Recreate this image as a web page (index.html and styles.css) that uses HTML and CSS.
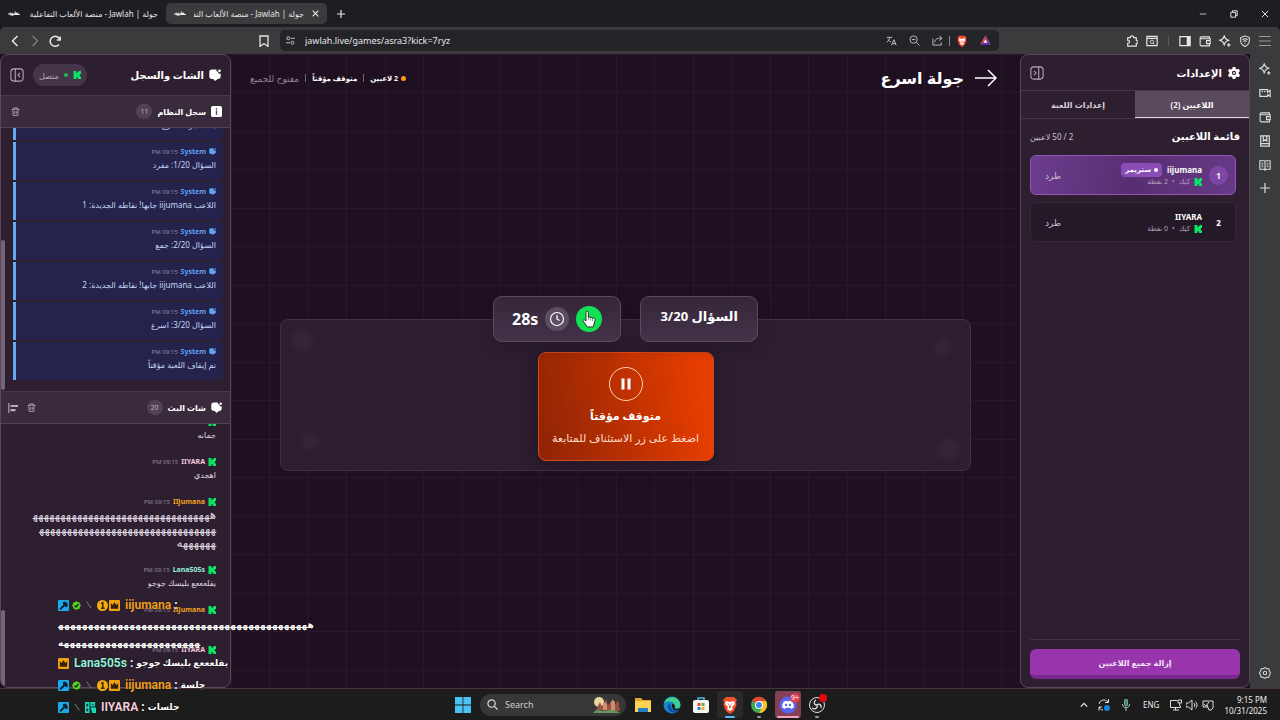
FILE: index.html
```html
<!DOCTYPE html>
<html lang="ar">
<head>
<meta charset="utf-8">
<title>جولة | Jawlah - منصة الألعاب التفاعلية</title>
<link rel="stylesheet" href="styles.css">
</head>
<body>
<svg class="defs" aria-hidden="true">
  <symbol id="kick" viewBox="0 0 16 16"><path fill="#0be567" d="M1 0h6v4h2V2h2V0h5v6h-2v2h-1v1h1v2h2v5h-6v-2H9v-2H7v4H1z"/></symbol>
  <symbol id="bubble" viewBox="0 0 20 20"><path fill="currentColor" d="M5 1h7.500c-.5 2.200.3 3.500 2.500 3.700.2 2.500 1.800 3.500 4.500 3.300V12a4.500 4.500 0 0 1-4 4.500h-1L10 20l-3-3.500H5A4.500 4.500 0 0 1 .5 12V5.500A4.500 4.500 0 0 1 5 1z"/><circle cx="17.500" cy="3" r="2.300" fill="currentColor"/></symbol>
  <symbol id="trash" viewBox="0 0 16 16"><path fill="none" stroke="currentColor" stroke-width="1.500" d="M1 4h14M5 4V1.500h6V4M3 4l1 11h8l1-11M6.500 7v5M9.500 7v5"/></symbol>
  <symbol id="panel" viewBox="0 0 16 16"><rect x="1" y="1" width="14" height="14" rx="3.500" fill="none" stroke="currentColor" stroke-width="1.200"/><path fill="none" stroke="currentColor" stroke-width="1.200" d="M6 1v14M11.500 5.500L9 8l2.500 2.500"/></symbol>
  <symbol id="spark" viewBox="0 0 16 16"><path fill="none" stroke="currentColor" stroke-width="1.500" stroke-linejoin="round" d="M7 .800c.7 4 2.200 5.500 6.500 6.200-4.300.7-5.800 2.200-6.500 6.500C6.300 9.200 4.800 7.700.500 7 4.800 6.300 6.300 4.800 7 .800z"/><path stroke="currentColor" stroke-width="1.500" d="M13 11v4.500M10.800 13.200h4.500"/></symbol>
  <symbol id="wallet" viewBox="0 0 16 16"><path fill="none" stroke="currentColor" stroke-width="1.400" d="M14 5V2.500H3a1.500 1.500 0 0 0-1.500 1.500v9A1.500 1.500 0 0 0 3 14.500h11V12M2 5h13v2.500M10 7.500h5v4h-5z"/></symbol>
  <symbol id="brave" viewBox="0 0 16 18"><path fill="#f1502f" d="M4 1h8l3 3-1 2 .5 3-2.500 6-4 3-4-3-2.500-6L2 6 1 4z"/><path fill="#fff" d="M4 5l4 1 4-1 1 3-3 3 1 2-3 2-3-2 1-2-3-3z"/><path fill="#f1502f" d="M5 7l2 1v1zM11 7L9 8v1zM7.500 9h1l.5 2.500-1 .8-1-.8z"/></symbol>
  <symbol id="jlogo" viewBox="0 0 22 10"><path fill="none" stroke="#eee" stroke-width="2" stroke-linecap="round" d="M1 5h3V3M4 6c2 1 3 0 3-2 2-1 3 1 2 3H7M10 6h3V1M14 6c1-4 5-3 4 0h-4M18 6h3"/></symbol>
  <symbol id="crown" viewBox="0 0 12 12"><rect width="12" height="12" rx="1" fill="#f0a010"/><path fill="#33230a" d="M2 3.500l2 2 2-3 2 3 2-2V9.500H2z"/></symbol>
  <symbol id="hammer" viewBox="0 0 12 12"><rect width="12" height="12" rx="1" fill="#1ba9ea"/><path fill="#10202c" d="M5 2.500L8 1.500 10.500 4v3L9 8 7.500 6.500 3 11 1.500 9.500 6 5z"/></symbol>
  <symbol id="check" viewBox="0 0 12 12"><path fill="#53d820" d="M6 0l1.700 1.500L10 1.700l.5 2.300L12 6l-1.500 2-.5 2.300-2.300.2L6 12l-1.700-1.500-2.300-.2L1.500 8 0 6l1.500-2L2 1.700l2.300-.2z"/><path fill="none" stroke="#122" stroke-width="1.700" d="M3.300 6l2 2 3.500-4"/></symbol>
  <symbol id="blade" viewBox="0 0 12 12"><path stroke="#808080" stroke-width="1.200" d="M3 2l6 8"/></symbol>
  <symbol id="coin" viewBox="0 0 12 12"><circle cx="6" cy="6" r="6" fill="#f5ac0c"/><path fill="none" stroke="#3a2703" stroke-width="1.700" d="M4.300 4L6.300 3v6M4.300 9h4"/></symbol>
</svg>

<header class="tabs" dir="ltr">
  <div class="tab"><svg class="jlogo"><use href="#jlogo"/></svg><span class="tab-title" dir="rtl">جولة | Jawlah - منصة الألعاب التفاعلية</span></div>
  <div class="tab active"><svg class="jlogo"><use href="#jlogo"/></svg><span class="tab-title" dir="rtl">جولة | Jawlah - منصة الألعاب التفا</span><button class="plain" aria-label="Close tab"><svg class="i7" viewBox="0 0 10 10"><path stroke="currentColor" stroke-width="1.700" d="M1 1l8 8M9 1L1 9"/></svg></button></div>
  <button class="plain newtab" aria-label="New tab"><svg class="i8" viewBox="0 0 10 10"><path stroke="currentColor" stroke-width="1.500" d="M5 0v10M0 5h10"/></svg></button>
  <div class="wincontrols">
    <button class="plain" aria-label="Minimize"><svg class="i8" viewBox="0 0 10 10"><path stroke="currentColor" d="M1 5h8"/></svg></button>
    <button class="plain" aria-label="Restore"><svg class="i8" viewBox="0 0 10 10"><path fill="none" stroke="currentColor" stroke-width="1.200" d="M1 3h6v6H1zM3 3V1h6v6H7"/></svg></button>
    <button class="plain" aria-label="Close"><svg class="i8" viewBox="0 0 10 10"><path stroke="currentColor" stroke-width="1.200" d="M1 1l8 8M9 1L1 9"/></svg></button>
  </div>
</header>

<nav class="toolbar" dir="ltr">
  <div class="navbtns">
    <button class="plain" aria-label="Back"><svg class="i12" viewBox="0 0 12 12"><path fill="none" stroke="currentColor" stroke-width="1.500" d="M8.500 1l-5 5 5 5"/></svg></button>
    <button class="plain dim" aria-label="Forward"><svg class="i12" viewBox="0 0 12 12"><path fill="none" stroke="currentColor" stroke-width="1.300" d="M3.500 1l5 5-5 5"/></svg></button>
    <button class="plain" aria-label="Reload"><svg class="i12" viewBox="0 0 12 12"><path fill="none" stroke="currentColor" stroke-width="1.500" d="M11 5A5 5 0 1 0 10 9.500M11.200 1.500V5H7.800"/></svg></button>
  </div>
  <button class="plain" aria-label="Bookmark"><svg class="i12" viewBox="0 0 12 12"><path fill="none" stroke="currentColor" stroke-width="1.300" d="M2 1h8v10.500L6 8.500l-4 3z"/></svg></button>
  <div class="urlbar">
    <svg class="i9" viewBox="0 0 12 12"><path fill="none" stroke="currentColor" stroke-width="1.300" d="M6.500 3H12M0 9h5"/><circle cx="3" cy="3" r="2" fill="none" stroke="currentColor" stroke-width="1.300"/><circle cx="8.500" cy="9" r="2" fill="none" stroke="currentColor" stroke-width="1.300"/></svg>
    <input class="url" aria-label="Address" value="jawlah.live/games/asra3?kick=7ryz">
    <button class="plain" aria-label="Translate"><svg class="i11" viewBox="0 0 14 12"><path fill="none" stroke="currentColor" stroke-width="1.200" d="M1 2h7M4.500 2c0 3-1.500 5-3.500 6M2.500 5c1 1.500 2 2 3.500 2.500M7 12l3-7 3 7M8 10h4"/></svg></button>
    <button class="plain" aria-label="Zoom out"><svg class="i11" viewBox="0 0 12 12"><circle cx="5" cy="5" r="4" fill="none" stroke="currentColor"/><path stroke="currentColor" d="M3 5h4M8 8l3.500 3.500"/></svg></button>
    <button class="plain" aria-label="Share"><svg class="i11" viewBox="0 0 12 12"><path fill="none" stroke="currentColor" d="M1 4v7h9V8M3 8c0-3 2-4.500 7-4.500M8 1l3 2.500L8 6"/></svg></button>
    <span class="sep"></span>
    <button class="plain" aria-label="Shields"><svg class="i12" viewBox="0 0 16 18"><use href="#brave"/></svg></button>
    <button class="plain" aria-label="Rewards"><svg class="i11" viewBox="0 0 12 12"><path fill="#e8483b" d="M6 0L0 11l6-4z"/><path fill="#8c3fae" d="M6 0l6 11-6-4z"/><path fill="#5136a8" d="M0 11h12L6 7z"/><path fill="#fff" d="M6 5l2 3.500H4z"/></svg></button>
  </div>
  <div class="exts">
    <button class="plain" aria-label="Extensions"><svg class="i12" viewBox="0 0 14 14"><path fill="none" stroke="currentColor" stroke-width="1.400" stroke-linejoin="round" d="M2 3h3a2 2 0 1 1 4 0h3v3.500a1.700 1.700 0 1 1 0 3.300V13H2V9.500a1.700 1.700 0 1 0 0-3.300z"/></svg></button>
    <button class="plain" aria-label="Search tabs"><svg class="i12" viewBox="0 0 14 14"><path fill="none" stroke="currentColor" stroke-width="1.400" d="M1 1.500h12v11H1zM1 4h12"/><circle cx="7" cy="8" r="2" fill="none" stroke="currentColor"/><path stroke="currentColor" d="M8.500 9.500l1.500 1.500"/></svg></button>
    <span class="sep wide"></span>
    <button class="plain" aria-label="Sidebar"><svg class="i12" viewBox="0 0 14 14"><path fill="none" stroke="currentColor" stroke-width="1.400" d="M1 2h12v10.500H1z"/><path fill="currentColor" d="M9 2h4v10H9z"/></svg></button>
    <button class="plain" aria-label="Wallet"><svg class="i12"><use href="#wallet"/></svg></button>
    <button class="plain" aria-label="Leo AI"><svg class="i12"><use href="#spark"/></svg></button>
    <button class="plain" aria-label="VPN"><svg class="i12" viewBox="0 0 14 14"><path fill="none" stroke="currentColor" stroke-width="1.200" d="M7 1l5 2v4c0 3-2 5-5 6.500C4 12 2 10 2 7V3zM4 5.500c2-1.500 4-1.500 6 0M5 7.500c1.500-1 2.500-1 4 0M6.500 9.500h1"/></svg></button>
    <button class="plain dimmer" aria-label="Menu"><svg class="i12" viewBox="0 0 12 12"><path stroke="currentColor" stroke-width="1.200" d="M0 1.500h12M0 6h12M0 10.500h12"/></svg></button>
  </div>
</nav>

<div class="browser">
<main class="app" dir="rtl">
  <aside class="panel settings">
    <div class="settings-head">
      <h2><svg class="i12" viewBox="0 0 14 14"><path fill="currentColor" fill-rule="evenodd" d="M5.500 0h3l.5 2 1.500.8 2-.7L14 4.700l-1.500 1.500v1.600L14 9.300l-1.500 2.600-2-.7L9 12l-.5 2h-3L5 12l-1.500-.8-2 .7L0 9.300l1.500-1.500V6.200L0 4.700l1.500-2.600 2 .7L5 2zM7 4.500a2.500 2.500 0 1 0 0 5 2.500 2.500 0 0 0 0-5z"/><circle cx="7" cy="7" r="1.200" fill="currentColor"/></svg>الإعدادات</h2>
      <button class="plain muted flip" aria-label="طي الإعدادات"><svg class="i14"><use href="#panel"/></svg></button>
    </div>
    <div class="settings-tabs">
      <button class="stab on">اللاعبين (2)</button>
      <button class="stab">إعدادات اللعبة</button>
    </div>
    <section class="players">
      <div class="players-title"><h3>قائمة اللاعبين</h3><span>2 / 50 لاعبين</span></div>
      <div class="players-list">
        <article class="player top">
          <span class="rank">1</span>
          <div class="pinfo">
            <div class="pname"><b>iijumana</b><span class="badge"><i></i>ستريمر</span></div>
            <div class="pmeta"><svg class="i8"><use href="#kick"/></svg><span>كيك</span><span>•</span><span>2 نقطة</span></div>
          </div>
          <button class="kickbtn">طرد</button>
        </article>
        <article class="player">
          <span class="rank">2</span>
          <div class="pinfo">
            <div class="pname"><b>IIYARA</b></div>
            <div class="pmeta"><svg class="i8"><use href="#kick"/></svg><span>كيك</span><span>•</span><span>0 نقطة</span></div>
          </div>
          <button class="kickbtn">طرد</button>
        </article>
      </div>
    </section>
    <footer class="settings-foot"><button class="remove">إزالة جميع اللاعبين</button></footer>
  </aside>

  <section class="stage">
    <header class="stage-head">
      <button class="plain" aria-label="رجوع"><svg class="arrow" viewBox="0 0 22 18"><path fill="none" stroke="currentColor" stroke-width="1.500" d="M0 9h21M13 1l8 8-8 8"/></svg></button>
      <h1>جولة اسرع</h1>
      <div class="status"><i class="odot"></i><span>2 لاعبين</span><em></em><span>متوقف مؤقتاً</span><em></em><span class="open">مفتوح للجميع</span></div>
    </header>
    <div class="board-wrap">
      <div class="board">
        <div class="pills">
          <div class="pill"><span class="question">السؤال 3/20</span></div>
          <div class="pill timer">
            <button class="resume" aria-label="استئناف"><svg class="hand" viewBox="0 0 14 18"><path fill="#fff" stroke="#333" stroke-width="1" d="M4 11V2.500a1.200 1.200 0 0 1 2.400 0V7l1.800.2 2 .5 2 .6c.8.3 1 .8.800 2L12 14l-1 3H5.500L1 11c-.4-1 1-1.600 1.700-.9z"/><path stroke="#666" stroke-width=".7" d="M6.400 7v3M8.400 7.500v3M10.500 8v3"/></svg></button>
            <span class="clock"><svg class="i16" viewBox="0 0 16 16"><circle cx="8" cy="8" r="6.500" fill="none" stroke="currentColor" stroke-width="1.200"/><path fill="none" stroke="currentColor" stroke-width="1.200" d="M8 4v4l2.500 1.500"/></svg></span>
            <strong dir="ltr">28s</strong>
          </div>
        </div>
        <i class="blob b1"></i><i class="blob b2"></i><i class="blob b3"></i><i class="blob b4"></i>
        <div class="paused">
          <span class="pauseicon"><svg class="i14" viewBox="0 0 14 14"><path fill="currentColor" d="M2.500 1.500h3v11h-3zM8.500 1.500h3v11h-3z"/></svg></span>
          <h2>متوقف مؤقتاً</h2>
          <p>اضغط على زر الاستئناف للمتابعة</p>
        </div>
      </div>
    </div>
  </section>

  <aside class="panel chat">
    <div class="chat-head">
      <h2><svg class="i12"><use href="#bubble"/></svg>الشات والسجل</h2>
      <span class="online"><svg class="i8"><use href="#kick"/></svg><i></i>متصل</span>
      <button class="plain muted" aria-label="طي الشات"><svg class="i14"><use href="#panel"/></svg></button>
    </div>
    <div class="sub-head">
      <h3><svg class="i11" viewBox="0 0 12 12"><rect width="12" height="12" rx="2" fill="currentColor"/><path stroke="#56465a" stroke-width="1.500" d="M6 5v4.500M6 2.500V4"/></svg>سجل النظام</h3><span class="count">11</span>
      <span class="acts"><button class="plain" aria-label="مسح السجل"><svg class="i9"><use href="#trash"/></svg></button></span>
    </div>
    <div class="log">
      <span class="thumb t1"></span>
      <article class="sys"><div class="meta"><svg class="i7"><use href="#bubble"/></svg><b>System</b><time>09:15 PM</time></div><p>بدأت جولة اسرع</p></article>
      <article class="sys"><div class="meta"><svg class="i7"><use href="#bubble"/></svg><b>System</b><time>09:15 PM</time></div><p>السؤال 1/20: مفرد</p></article>
      <article class="sys"><div class="meta"><svg class="i7"><use href="#bubble"/></svg><b>System</b><time>09:15 PM</time></div><p>اللاعب iijumana جابها! نقاطه الجديدة: 1</p></article>
      <article class="sys"><div class="meta"><svg class="i7"><use href="#bubble"/></svg><b>System</b><time>09:15 PM</time></div><p>السؤال 2/20: جمع</p></article>
      <article class="sys"><div class="meta"><svg class="i7"><use href="#bubble"/></svg><b>System</b><time>09:15 PM</time></div><p>اللاعب iijumana جابها! نقاطه الجديدة: 2</p></article>
      <article class="sys"><div class="meta"><svg class="i7"><use href="#bubble"/></svg><b>System</b><time>09:15 PM</time></div><p>السؤال 3/20: اسرع</p></article>
      <article class="sys"><div class="meta"><svg class="i7"><use href="#bubble"/></svg><b>System</b><time>09:15 PM</time></div><p>تم إيقاف اللعبة مؤقتاً</p></article>
    </div>
    <div class="sub-head second">
      <h3><svg class="i11"><use href="#bubble"/></svg>شات البث</h3><span class="count">20</span>
      <span class="acts"><button class="plain" aria-label="مسح الشات"><svg class="i9"><use href="#trash"/></svg></button><button class="plain" aria-label="محاذاة"><svg class="i10" viewBox="0 0 12 12"><path stroke="currentColor" stroke-width="1.300" d="M1 0v12"/><path stroke="currentColor" stroke-width="2.500" d="M3 3.500h9M3 8.500h6"/></svg></button></span>
    </div>
    <div class="messages">
      <span class="thumb t2"></span>
      <article class="msg"><div class="meta"><svg class="i8"><use href="#kick"/></svg><b class="pink">IIYARA</b><time>09:15 PM</time></div><p>جمانه</p></article>
      <article class="msg"><div class="meta"><svg class="i8"><use href="#kick"/></svg><b class="pink">IIYARA</b><time>09:15 PM</time></div><p>اهجدي</p></article>
      <article class="msg"><div class="meta"><svg class="i8"><use href="#kick"/></svg><b class="orange">IIJumana</b><time>09:15 PM</time></div><p class="laugh">ههههههههههههههههههههههههههههههههه&zwj;<br>&zwj;هههههههههههههههههههههههههههههههه&zwj;<br>&zwj;ههههههه</p></article>
      <article class="msg"><div class="meta"><svg class="i8"><use href="#kick"/></svg><b class="mint">Lana505s</b><time>09:15 PM</time></div><p>يقلعععع بليسك جوجو</p></article>
      <article class="msg"><div class="meta"><svg class="i8"><use href="#kick"/></svg><b class="orange">IIJumana</b><time>09:15 PM</time></div><p>&nbsp;</p></article>
      <article class="msg"><div class="meta"><svg class="i8"><use href="#kick"/></svg><b class="pink">IIYARA</b><time>09:15 PM</time></div><p>&nbsp;</p></article>
    </div>
  </aside>
</main>
<nav class="sidebar" dir="ltr">
  <button class="plain" aria-label="Leo AI"><svg class="i12"><use href="#spark"/></svg></button>
  <button class="plain" aria-label="Talk"><svg class="i12" viewBox="0 0 14 14"><path fill="none" stroke="currentColor" stroke-width="1.400" d="M1 3h9v3l3-2v7l-3-2v2H1zM3 5.500h1.500M6 5.500h1.500"/></svg></button>
  <button class="plain" aria-label="Wallet"><svg class="i12"><use href="#wallet"/></svg></button>
  <button class="plain" aria-label="Bookmarks"><svg class="i12" viewBox="0 0 14 14"><path fill="none" stroke="currentColor" stroke-width="1.400" d="M2 1h10v12H2zM2 10h10M5 1v6l2-1.500L9 7V1"/></svg></button>
  <button class="plain" aria-label="Reading list"><svg class="i12" viewBox="0 0 14 14"><path fill="none" stroke="currentColor" stroke-width="1.300" d="M1 2h5l1 1 1-1h5v10H8l-1 1-1-1H1zM7 3v9M3 5h2M3 7h2M3 9h2M9 5h2M9 7h2M9 9h2"/></svg></button>
  <button class="plain" aria-label="Add"><svg class="i10" viewBox="0 0 10 10"><path stroke="currentColor" stroke-width="1.200" d="M5 0v10M0 5h10"/></svg></button>
  <button class="plain gear" aria-label="Settings"><svg class="i12" viewBox="0 0 14 14"><path fill="none" stroke="currentColor" stroke-width="1.200" stroke-linejoin="round" d="M5 2l2-1.300L9 2h2.500l.5 2.500L13.500 7 12 9.500 11.500 12H9l-2 1.300L5 12H2.500L2 9.500.5 7 2 4.500 2.500 2z"/><circle cx="7" cy="7" r="2" fill="none" stroke="currentColor" stroke-width="1.200"/></svg></button>
</nav>
</div>

<footer class="taskbar" dir="ltr">
  <div class="apps">
    <button class="app-ic" aria-label="Start"><svg class="i16" viewBox="0 0 16 16"><path fill="#4cc2f4" d="M0 0h7.600v7.600H0zM8.400 0H16v7.600H8.400zM0 8.400h7.600V16H0zM8.400 8.400H16V16H8.400z"/></svg></button>
    <label class="search"><svg class="i11" viewBox="0 0 12 12"><circle cx="5" cy="5" r="4" fill="none" stroke="currentColor" stroke-width="1.300"/><path stroke="currentColor" stroke-width="1.300" d="M8 8l3.500 3.500"/></svg><input aria-label="Search" placeholder="Search"><svg class="scene" viewBox="0 0 28 18"><circle cx="6" cy="6" r="5" fill="#ead79c"/><path fill="#99523f" d="M3 14l4-8 2 5 4-8 2 6 5-6 2 6 3-5 2 11z"/><path fill="#cf9070" d="M10 14V8l2-2 2 2v6zM18 14V6l2-2 2 2v8z"/><path fill="#6c9262" d="M0 17c4-5 8-2 11-2s8-4 16 2z"/></svg></label>
    <button class="app-ic" aria-label="File Explorer"><svg class="i18" viewBox="0 0 18 18"><path fill="#e2a52c" d="M1 2h6l2 2h8v12H1z"/><path fill="#fbd251" d="M1 5h16v11H1z"/><path fill="#2280c5" d="M4 12h10v4H4z"/></svg></button>
    <button class="app-ic" aria-label="Edge"><svg class="i18" viewBox="0 0 18 18"><circle cx="9" cy="9" r="8.500" fill="#1686cf"/><path fill="#42cf87" d="M1 7A8.500 8.500 0 0 1 17.500 9c0 3-3 4-6 3 2-4-2-7-5-6.500C4 5.500 2 6 1 7z"/><path fill="#124c9c" d="M6 7c-3 4 0 10 6 9.800 2-.3 3.500-1.500 4-2.600-4 1.800-8-.5-8-3.700z"/><path fill="#1c1c1c" d="M9 8c2-.5 4 2 2.500 4 2 1.300 4 1 5.500 0l-1 2c-4 1.500-8-1-7-6z"/></svg></button>
    <button class="app-ic" aria-label="Store"><svg class="i18" viewBox="0 0 18 18"><path fill="none" stroke="#48b8ef" stroke-width="1.500" d="M6 5V2h6v3"/><rect x="1" y="4" width="16" height="13" rx="2" fill="#f4f4f4"/><path fill="#e84b32" d="M5.500 7h3v3h-3z"/><path fill="#6cb33e" d="M9.500 7h3v3h-3z"/><path fill="#2585dc" d="M5.500 11h3v3h-3z"/><path fill="#f2b51d" d="M9.500 11h3v3h-3z"/></svg></button>
    <button class="app-ic lit" aria-label="Brave"><svg class="i18" viewBox="0 0 16 18"><use href="#brave"/></svg></button>
    <button class="app-ic run" aria-label="Chrome"><svg class="i18" viewBox="0 0 18 18"><circle cx="9" cy="9" r="8" fill="#3bab55"/><path fill="#e44336" d="M9 9L2 5a8 8 0 0 1 14 0z"/><path fill="#f9c421" d="M9 5h7a8 8 0 0 1-7 12l4-7z"/><circle cx="9" cy="9" r="4" fill="#fff"/><circle cx="9" cy="9" r="3" fill="#4286ee"/></svg></button>
    <button class="app-ic discord" aria-label="Discord"><svg class="i18" viewBox="0 0 18 18"><circle cx="9" cy="9" r="8.500" fill="#5865f2"/><path fill="#fff" d="M5 5.500l3-.7.5.7h1l.5-.7 3 .7c1.500 2 2 4 1.800 6L12 13l-.8-1.300H6.800L6 13l-2.800-1.500C3 9.500 3.500 7.500 5 5.500z"/><circle cx="7" cy="9" r="1.200" fill="#5865f2"/><circle cx="11" cy="9" r="1.200" fill="#5865f2"/></svg><span class="nine">9+</span></button>
    <button class="app-ic run" aria-label="OBS"><svg class="i18" viewBox="0 0 18 18"><circle cx="9" cy="9" r="7.500" fill="#222" stroke="#ddd"/><path fill="none" stroke="#ddd" stroke-width="1.300" d="M9 9c-3 0-4-3-1-5M9 9c2-2 5 0 4 3M9 9c1 3-2 5-5 3"/></svg><span class="rec"></span></button>
  </div>
  <div class="tray">
    <button class="plain" aria-label="Hidden icons"><svg class="i8" viewBox="0 0 10 10"><path fill="none" stroke="currentColor" stroke-width="1.500" d="M1 7l4-4 4 4"/></svg></button>
    <svg class="i12" viewBox="0 0 12 12"><path fill="none" stroke="#ddd" d="M1 5a5 5 0 0 1 9-2M10.500 0v3.500H7M1 11.500V8h3M1 8c1 2 2 3 4 3"/><circle cx="9" cy="9" r="3" fill="#1684df"/></svg>
    <svg class="i12" viewBox="0 0 12 12"><rect x="4.500" y="0" width="3" height="7" rx="1.500" fill="#3a8378" stroke="#a8ccc6" stroke-width=".7"/><path fill="none" stroke="#a8ccc6" d="M2.500 5c0 5 7 5 7 0M6 9v3"/></svg>
    <span class="lang">ENG</span>
    <span class="group"><svg class="i12" viewBox="0 0 12 12"><path fill="none" stroke="#ddd" d="M7 1.500H.5v7h10V7M3 11h6M5.500 8.500V11M8 1h3.500v3H8zM9.700 4v3"/></svg>
    <svg class="i12" viewBox="0 0 12 12"><path fill="none" stroke="#ddd" d="M0 4h2.500L6 1v10L2.500 8H0zM8 4c1 1 1 3 0 4M9.500 2.500c2 2 2 5 0 7"/></svg>
    <svg class="i12" viewBox="0 0 12 12"><path fill="none" stroke="#ddd" d="M6 8H1V2h10v3M2 5l2 2 3-4M5 6l2 5h2l2-2V5"/></svg></span>
    <time class="clocktext">9:15 PM<br>10/31/2025</time>
  </div>
</footer>

<div class="overlay" dir="ltr">
  <div class="orow"><svg class="i11"><use href="#hammer"/></svg><svg class="i9"><use href="#check"/></svg><svg class="i10"><use href="#blade"/></svg><svg class="i11 coin"><use href="#coin"/></svg><svg class="i11"><use href="#crown"/></svg><b class="orange">iijumana</b><b>:</b></div>
  <p class="owrap">ههههههههههههههههههههههههههههههههههههههههههه&zwj;<br>&zwj;هههههههههههههههههههههههه</p>
  <div class="orow"><svg class="i11"><use href="#crown"/></svg><b class="mint">Lana505s</b><b>:</b><b class="said">يقلعععع بليسك جوجو</b></div>
  <div class="orow"><svg class="i11"><use href="#hammer"/></svg><svg class="i9"><use href="#check"/></svg><svg class="i10"><use href="#blade"/></svg><svg class="i11 coin"><use href="#coin"/></svg><svg class="i11"><use href="#crown"/></svg><b class="orange">iijumana</b><b>:</b><b class="said">جلسة</b></div>
  <div class="orow"><svg class="i11"><use href="#hammer"/></svg><svg class="i10"><use href="#blade"/></svg><svg class="i11" viewBox="0 0 12 12"><path fill="#18d9b8" d="M0 0h5v12H0zM6 0h5v5H6zM6 6h6v6H8z"/><path fill="#18323a" d="M1.500 2h2v3h-2zM1.500 7h2v3h-2zM8 2h1.500v1.500H8z"/></svg><b class="pink">IIYARA</b><b>:</b><b class="said">جلسات</b></div>
</div>
</body>
</html>
```
FILE: styles.css
```css
* { box-sizing: border-box; }
body { margin: 0; height: 100vh; display: flex; flex-direction: column; position: relative; overflow: hidden; background: #1f1021; color: #fff; font-family: "Noto Sans", "DejaVu Sans", sans-serif; font-size: 9px; }
h1, h2, h3, p { margin: 0; }
button, input { font: inherit; color: inherit; }
.defs { position: absolute; width: 0; height: 0; }
svg { flex: none; display: block; }
.plain { background: none; border: 0; padding: 0; display: flex; align-items: center; justify-content: center; }
.i7 { width: 7px; height: 7px; } .i8 { width: 8px; height: 8px; } .i9 { width: 9px; height: 9px; }
.i10 { width: 10px; height: 10px; } .i11 { width: 11px; height: 11px; } .i12 { width: 12px; height: 12px; }
.i14 { width: 14px; height: 14px; } .i16 { width: 16px; height: 16px; } .i18 { width: 18px; height: 18px; }

.tabs { flex: none; height: 27px; background: #1e1e22; display: flex; align-items: center; color: #e6e6e8; }
.tab { width: 166px; height: 21px; padding: 0 8px; display: flex; align-items: center; gap: 8px; border-radius: 5px; }
.tab.active { width: 161px; background: #3b3b3e; }
.jlogo { width: 12px; height: 8px; }
.tab-title { flex: 1; white-space: nowrap; overflow: hidden; font-size: 8px; line-height: 16px; }
.newtab { margin-left: 10px; }
.wincontrols { margin-left: auto; display: flex; gap: 23px; padding-right: 11px; }

.toolbar { flex: none; height: 27px; background: #3b3b3e; display: flex; align-items: center; gap: 10px; padding: 0 9px; color: #e6e6e8; border-radius: 5px 5px 0 0; }
.navbtns { display: flex; gap: 8px; flex: 0 0 239px; }
.dim { color: #818184; } .dimmer { color: #9b9b9e; }
.urlbar { flex: 1; height: 21px; border-radius: 5px; background: #242428; display: flex; align-items: center; gap: 12px; padding: 0 8px 0 6px; color: #c4c4c8; }
.url { flex: 1; min-width: 0; margin-left: -2px; padding: 0; border: 0; background: none; font-size: 9px; color: #e6e6e8; }
.sep { width: 1px; height: 10px; background: #88888b; margin: 0 -6px; } .sep.wide { margin: 0 2px; background: #58585b; }
.exts { display: flex; align-items: center; gap: 8px; padding-left: 117px; }

.browser { flex: 1; min-height: 0; display: flex; }
.app { flex: 1; min-width: 0; display: flex; }
.sidebar { flex: 0 0 30px; background: #3b3b3e; color: #dcdcde; display: flex; flex-direction: column; align-items: center; gap: 12px; padding: 9px 0; }
.gear { margin-top: auto; }
.panel { flex: 0 0 230px; min-height: 0; display: flex; flex-direction: column; background: #2e1f30; border: 1px solid #59465c; border-radius: 8px; overflow: hidden; }
.panel.chat { flex-basis: 231px; }
.muted { color: #b5a9b8; }
.flip { transform: scaleX(-1); }

.settings-head { flex: none; height: 35px; display: flex; align-items: center; justify-content: space-between; padding: 0 9px; }
.settings-head h2 { display: flex; align-items: center; gap: 6px; font-size: 10px; }
.settings-tabs { flex: none; height: 29px; display: flex; border-top: 1px solid #463449; border-bottom: 1px solid #463449; }
.stab { flex: 1; background: none; border: 0; padding: 0; font-size: 8px; color: #d8cfda; font-weight: 600; }
.stab.on { background: #5a4a5e; color: #fff; border-bottom: 1px solid #e0d6e2; }
.players { flex: 1; min-height: 0; padding: 8px 9px; }
.players-title { display: flex; justify-content: space-between; align-items: center; height: 18px; color: #cfc4d2; font-size: 8px; }
.players-title h3 { font-size: 10px; color: #fff; }
.players-list { display: flex; flex-direction: column; gap: 7px; padding: 10px 4px 0 0; }
.player { height: 40px; display: flex; align-items: center; gap: 7px; padding: 0 7px; border: 1px solid #342738; border-radius: 6px; background: #241a27; }
.player.top { background: linear-gradient(100deg, #6c3d8e, #582e72 50%, #663a86); border-color: #9256b4; }
.rank { width: 19px; height: 19px; border-radius: 50%; display: flex; align-items: center; justify-content: center; font-size: 8px; font-weight: 700; }
.top .rank { background: #7d47a5; }
.pinfo { flex: 1; }
.pname { display: flex; align-items: center; gap: 5px; height: 14px; font-size: 8px; line-height: 14px; }
.badge { height: 14px; display: flex; align-items: center; gap: 3px; padding: 0 4px; background: #8b4db5; border-radius: 4px; font-size: 7px; font-weight: 700; }
.badge i { width: 4px; height: 4px; border-radius: 50%; background: #fff; }
.pmeta { display: flex; align-items: center; gap: 4px; font-size: 7px; line-height: 10px; color: #b4a2bd; }
.kickbtn { background: none; border: 0; padding: 0 7px; font-size: 9px; color: #cbbdd0; }
.settings-foot { flex: none; margin: 0 9px; padding: 9px 0 8px; border-top: 1px solid #443247; }
.remove { width: 100%; height: 30px; padding: 0; border: 0; border-bottom: 4px solid #78278c; border-radius: 6px; background: #9834ac; font-size: 8px; font-weight: 600; color: #f6e4fa; }

.stage { flex: 1; min-width: 0; display: flex; flex-direction: column; background-color: #1f1021; background-image: linear-gradient(90deg, #29162b 1px, transparent 1px, transparent 38px, #29162b 38px, #29162b 39px, transparent 39px), linear-gradient(#29162b 1px, transparent 1px, transparent 38px, #29162b 38px, #29162b 39px, transparent 39px); background-size: 77px 77px; }
.stage-head { flex: none; height: 48px; display: flex; align-items: center; gap: 11px; padding: 0 23px 0 19px; }
.arrow { width: 22px; height: 18px; }
.stage-head h1 { font-size: 16px; line-height: 24px; }
.status { margin-right: auto; display: flex; align-items: center; gap: 6px; font-size: 7px; font-weight: 700; }
.status em { width: 1px; height: 8px; background: #75647a; }
.odot { width: 5px; height: 5px; border-radius: 50%; background: #ff981f; margin-left: -3px; }
.open { color: #8f8292; font-weight: 400; font-size: 9px; }
.board-wrap { flex: 1; display: flex; flex-direction: column; justify-content: center; padding: 0 49px; }
.board { position: relative; display: flex; justify-content: center; padding: 32px 0 9px; border: 1px solid #3f3042; border-radius: 8px; background: #2c1e2f; }
.pills { position: absolute; left: 0; right: 0; top: -24px; display: flex; justify-content: center; gap: 19px; z-index: 1; }
.pill { height: 46px; display: flex; align-items: center; gap: 7px; padding: 0 19px; border: 1px solid #594a5d; border-radius: 9px; background: linear-gradient(#352639, #42334a); box-shadow: 0 6px 14px #1f122255; }
.timer { padding: 0 18px; }
.question { font-size: 13px; font-weight: 700; padding-bottom: 6px; }
.timer strong { font-size: 16px; }
.resume { width: 26px; height: 26px; padding: 0; border: 0; border-radius: 50%; background: #10e252; display: flex; align-items: center; justify-content: center; }
.hand { width: 14px; height: 18px; }
.clock { width: 24px; height: 24px; border-radius: 50%; background: #5c4e60; display: flex; align-items: center; justify-content: center; }
.paused { width: 176px; display: flex; flex-direction: column; align-items: center; padding: 14px 10px 14px; border: 1px solid #d34a1b; border-radius: 8px; background: linear-gradient(80deg, #8f2404, #bd3102 50%, #e63d00 90%); box-shadow: 0 3px 16px #1c0e2088; white-space: nowrap; }
.pauseicon { width: 34px; height: 34px; border: 1px solid #ffd2ad; border-radius: 50%; display: flex; align-items: center; justify-content: center; }
.paused h2 { font-size: 11px; line-height: 18px; margin-top: 6px; }
.paused p { font-size: 11px; line-height: 16px; margin-top: 5px; color: #ffdcc8; }
.blob { position: absolute; width: 22px; height: 22px; border-radius: 50%; background: #332536; filter: blur(2px); }
.b1 { left: 10px; top: 10px; } .b2 { right: 18px; top: 18px; width: 18px; height: 18px; } .b3 { left: 20px; bottom: 20px; width: 18px; height: 18px; } .b4 { right: 10px; bottom: 10px; }

.chat-head { flex: none; height: 40px; display: flex; align-items: center; padding: 0 9px; }
.chat-head h2 { display: flex; align-items: center; gap: 5px; font-size: 10px; margin-left: auto; }
.online { height: 22px; display: flex; align-items: center; gap: 5px; padding: 0 6px; border-radius: 11px; background: #453548; color: #b5a9b8; font-size: 8px; margin-left: 9px; }
.online i { width: 4px; height: 4px; border-radius: 50%; background: #20b35a; }
.sub-head { flex: none; height: 33px; display: flex; align-items: center; gap: 5px; padding: 0 8px 0 10px; background: #392a3c; border-top: 1px solid #48384b; border-bottom: 1px solid #534256; }
.second { padding-left: 7px; }
.sub-head h3 { display: flex; align-items: center; gap: 5px; font-size: 8px; }
.count { min-width: 15px; height: 15px; padding: 0 4px; border-radius: 8px; background: #514155; color: #b9adbc; font-size: 7px; line-height: 15px; text-align: center; }
.acts { margin-right: auto; display: flex; gap: 9px; color: #b9adbc; }
.log, .messages { position: relative; flex: 1 1 17px; min-height: 0; overflow: hidden; display: flex; flex-direction: column; justify-content: flex-end; }
.log { gap: 2px; padding: 0 7px 11px 12px; }
.messages { gap: 13px; padding: 0 14px 17px; }
.sys { flex: none; height: 38px; padding: 3px 7px; border-left: 3px solid #65a9f4; border-radius: 0 5px 5px 0; background: #25234b; color: #c4d6f8; }
.sys p, .msg p { font-size: 8px; line-height: 14px; white-space: nowrap; }
.msg .laugh { font-size: 12px; }
.meta { display: flex; align-items: center; gap: 3px; height: 13px; font-size: 7px; }
.sys .meta { color: #5ea4f2; }
.meta time { color: #94899e; font-size: 6px; }
.msg { flex: none; color: #ded5e0; }
.thumb { position: absolute; left: 0; bottom: 1px; width: 4px; border-radius: 2px; background: #756579; }
.t1 { height: 150px; } .t2 { height: 76px; }
.pink { color: #f3c9dc; } .orange { color: #f0a020; } .mint { color: #92efd9; }

.taskbar { flex: none; height: 32px; display: grid; grid-template-columns: 1fr auto 1fr; align-items: center; background: #1c1c1c; border-top: 1px solid #47333f; }
.apps { grid-column: 2; display: flex; align-items: center; gap: 3px; }
.app-ic { position: relative; width: 26px; height: 27px; padding: 0; border: 0; border-radius: 3px; background: none; display: flex; align-items: center; justify-content: center; }
.search { width: 146px; height: 22px; border-radius: 11px; background: #373737; display: flex; align-items: center; gap: 7px; padding: 0 5px 0 7px; margin: 0 1px; color: #ddd; }
.search input { flex: 1; min-width: 0; border: 0; padding: 0; background: none; font-size: 9px; }
.search input::placeholder { color: #ccc; opacity: 1; }
.scene { width: 28px; height: 18px; }
.lit { background: #2b2a2b; }
.lit::after, .run::after, .discord::after { content: ""; position: absolute; bottom: 0; left: 8px; right: 8px; height: 2px; border-radius: 1px; background: #5bb5f5; }
.run::after { left: 11px; right: 11px; background: #999; }
.discord { background: #854057; } .discord::after { left: 2px; right: 2px; background: #f3a0b8; }
.nine { position: absolute; top: 2px; right: 1px; width: 10px; height: 10px; border-radius: 50%; background: #d84052; font-size: 7px; line-height: 10px; }
.rec { position: absolute; top: 3px; right: 3px; width: 8px; height: 8px; border-radius: 50%; background: #e60909; }
.tray { grid-column: 3; justify-self: end; display: flex; align-items: center; gap: 10px; padding-right: 13px; font-size: 8px; color: #eee; }
.lang { padding: 0 1px; }
.group { display: flex; gap: 4px; }
.clocktext { text-align: right; line-height: 11px; }

.overlay { position: absolute; left: 58px; bottom: 2px; z-index: 3; font-family: Roboto, "DejaVu Sans", sans-serif; font-size: 12px; white-space: nowrap; text-shadow: 0 0 1px #000; }
.orow { display: flex; align-items: center; gap: 3px; height: 22px; }
.orow b:first-of-type { margin-left: 2px; }
.coin { margin-right: -2px; }
.said { font-size: 9px; }
.owrap { font-size: 9px; font-weight: 700; line-height: 18px; }
```
